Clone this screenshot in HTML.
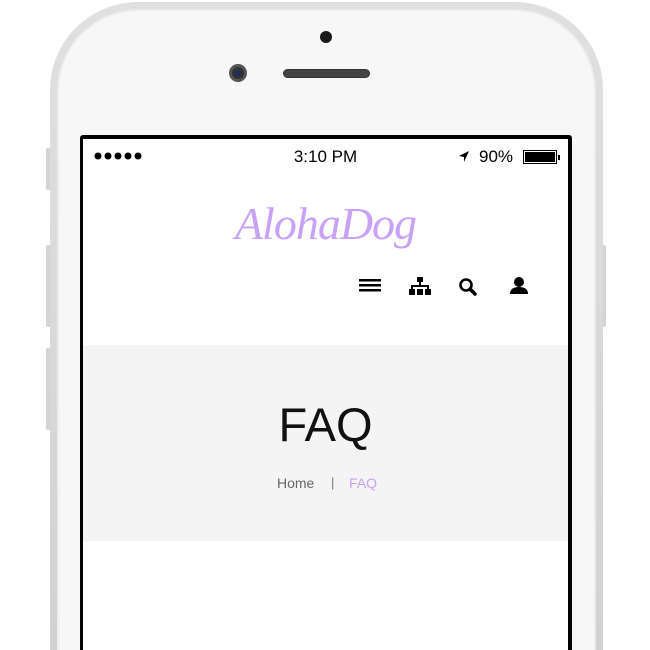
<!DOCTYPE html>
<html style="width:650px;height:650px;overflow:hidden"><head><style>
*{margin:0;padding:0;box-sizing:border-box}
body{width:650px;height:650px;background:#fff;position:relative;overflow:hidden;font-family:"Liberation Sans",sans-serif}
.btn{position:absolute;background:#d4d4d4;border-radius:2px}
.phone{position:absolute;left:50px;top:2px;width:553px;height:648px;border-radius:88px 88px 0 0;background:linear-gradient(#e0e0e0,#d2d2d2);}
.face{position:absolute;left:57px;top:9px;width:539px;height:641px;border-radius:82px 82px 0 0;background:#f7f7f7;border:2px solid #ececec;border-bottom:0}
.screen{position:absolute;left:80px;top:135px;width:492px;height:515px;background:#000;border-radius:3px 3px 0 0}
.inner{position:absolute;left:83px;top:139px;width:485px;height:511px;background:#fff;overflow:hidden}
</style></head><body>
<div class="btn" style="left:46px;top:148px;width:5px;height:42px"></div>
<div class="btn" style="left:46px;top:245px;width:5px;height:82px"></div>
<div class="btn" style="left:46px;top:348px;width:5px;height:82px"></div>
<div class="btn" style="left:601px;top:245px;width:5px;height:82px"></div>
<div class="phone"></div>
<div class="face"></div>
<div style="position:absolute;left:320px;top:31px;width:12px;height:12px;border-radius:50%;background:#1a1a1a"></div>
<div style="position:absolute;left:229px;top:64px;width:18px;height:18px;border-radius:50%;background:#333;border:3px solid #555"><div style="margin:3px;width:6px;height:6px;border-radius:50%;background:#1d2e5a"></div></div>
<div style="position:absolute;left:283px;top:69px;width:87px;height:9px;border-radius:5px;background:#444;border:1px solid #333"></div>
<div class="screen"></div>
<div class="inner">
 <svg style="position:absolute;left:11px;top:13px" width="52" height="8"><circle cx="4" cy="4" r="3.5"/><circle cx="14" cy="4" r="3.5"/><circle cx="24" cy="4" r="3.5"/><circle cx="34" cy="4" r="3.5"/><circle cx="44" cy="4" r="3.5"/></svg>
 <div style="position:absolute;left:0;width:485px;top:8px;text-align:center;font-size:17px;color:#000">3:10 PM</div>
 <svg style="position:absolute;left:375px;top:11px" width="12" height="13"><path d="M11 1 L1 6 L6 7 L6 12 Z"/></svg>
 <div style="position:absolute;left:396px;top:8px;font-size:17px;color:#000">90%</div>
 <div style="position:absolute;left:440px;top:11px;width:34px;height:14px;border:1px solid #000;padding:1px"><div style="width:100%;height:100%;background:#000"></div></div>
 <div style="position:absolute;left:475px;top:16px;width:2px;height:5px;background:#000"></div>
 <div style="position:absolute;left:0;width:485px;top:58px;text-align:center;font-family:'Liberation Serif',serif;font-style:italic;font-size:46px;color:#c8a2f5;letter-spacing:-1px">AlohaDog</div>
 <svg style="position:absolute;left:276px;top:138px" width="22" height="16"><rect x="0" y="2" width="22" height="2.5"/><rect x="0" y="7" width="22" height="2.5"/><rect x="0" y="12" width="22" height="2.5"/></svg>
 <svg style="position:absolute;left:326px;top:138px" width="22" height="18"><rect x="8" y="0" width="6" height="5"/><rect x="10" y="5" width="2" height="4"/><rect x="2" y="8" width="18" height="2"/><rect x="2" y="8" width="2" height="4"/><rect x="18" y="8" width="2" height="4"/><rect x="0" y="12" width="6" height="6"/><rect x="8" y="12" width="6" height="6"/><rect x="16" y="12" width="6" height="6"/></svg>
 <svg style="position:absolute;left:376px;top:139px" width="20" height="18"><circle cx="7" cy="7" r="5.5" fill="none" stroke="#000" stroke-width="2.6"/><line x1="11" y1="11" x2="16" y2="16" stroke="#000" stroke-width="3.5" stroke-linecap="round"/></svg>
 <svg style="position:absolute;left:426px;top:138px" width="20" height="18"><circle cx="10" cy="5" r="5"/><path d="M1 17 Q1 10 10 10 Q19 10 19 17 Z"/></svg>
 <div style="position:absolute;left:0;top:206px;width:485px;height:196px;background:#f4f4f4"></div>
 <div style="position:absolute;left:0;width:485px;top:258px;text-align:center;font-size:47px;color:#111">FAQ</div>
 <div style="position:absolute;left:194px;top:336px;font-size:14px;color:#666">Home</div>
 <div style="position:absolute;left:248px;top:336px;font-size:13px;color:#777">|</div>
 <div style="position:absolute;left:266px;top:336px;font-size:14px;color:#c8a2f5">FAQ</div>
</div>
</body></html>
